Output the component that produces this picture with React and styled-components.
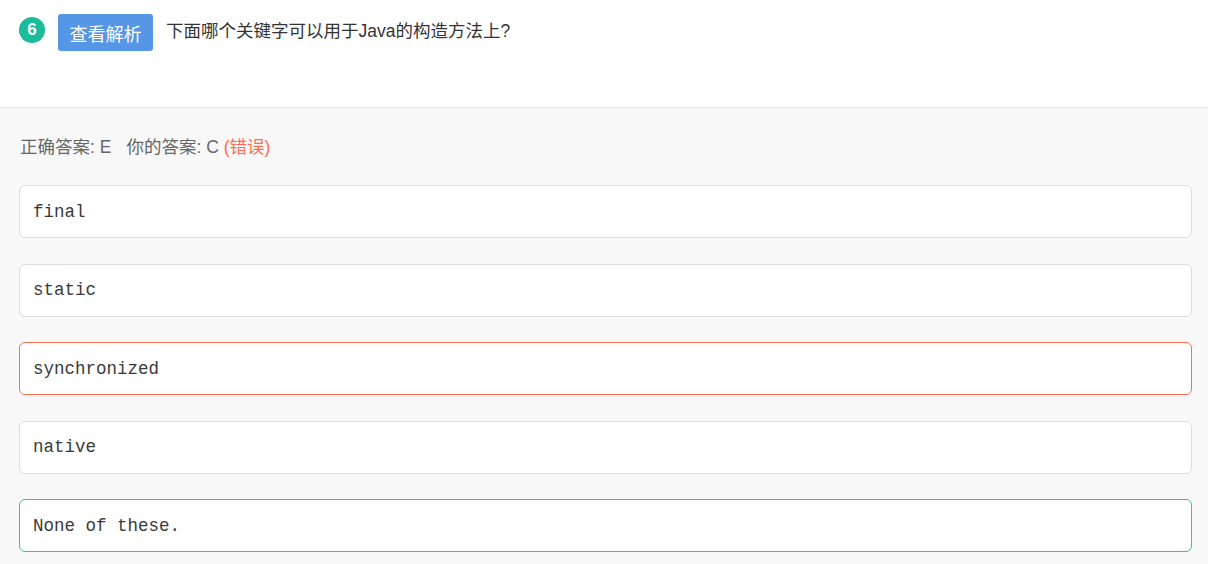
import styled, { createGlobalStyle } from 'styled-components';

const GlobalStyle = createGlobalStyle`
  body {
    margin: 0;
    background-color: #f8f8f8;
    font-family: "Liberation Sans", "Noto Sans CJK SC", sans-serif;
  }
`;

const options = [
  { text: 'final' },
  { text: 'static' },
  { text: 'synchronized', state: 'wrong' },
  { text: 'native' },
  { text: 'None of these.', state: 'right' },
];

export default function App() {
  return (
    <>
      <GlobalStyle />
      <StQuestion>
        <StBadge>6</StBadge>
        <StButton>查看解析</StButton>
        <StTitle>下面哪个关键字可以用于Java的构造方法上?</StTitle>
      </StQuestion>
      <StAnswerArea>
        <StAnswerLine>
          正确答案: E<StGap />你的答案: C <StWrong>(错误)</StWrong>
        </StAnswerLine>
        <StOptionList>
          {options.map((o) => (
            <StOption key={o.text} state={o.state}>
              {o.text}
            </StOption>
          ))}
        </StOptionList>
      </StAnswerArea>
    </>
  );
}

const StQuestion = styled.div`
  display: flex;
  align-items: flex-start;
  box-sizing: border-box;
  height: 108px;
  padding: 14px 0 0 19px;
  background-color: #ffffff;
  border-bottom: 1px solid #e8e8e8;
`;

const StBadge = styled.div`
  display: flex;
  align-items: center;
  justify-content: center;
  width: 26px;
  height: 26px;
  margin-top: 3px;
  border-radius: 50%;
  background-color: #1abc9c;
  color: #ffffff;
  font-size: 17px;
  font-weight: 600;
  font-family: "Liberation Sans", sans-serif;
`;

const StButton = styled.div`
  display: flex;
  align-items: center;
  justify-content: center;
  box-sizing: border-box;
  width: 95px;
  height: 37px;
  margin-left: 13px;
  border-radius: 3px;
  background-color: #5596e6;
  color: #ffffff;
  font-size: 18px;
`;

const StTitle = styled.div`
  margin-left: 13px;
  margin-top: 5px;
  line-height: 24px;
  font-size: 17.5px;
  color: #333333;
`;

const StAnswerArea = styled.div`
  padding: 27px 16px 0 19px;
`;

const StAnswerLine = styled.div`
  padding-left: 1px;
  line-height: 24px;
  font-size: 17.5px;
  color: #666666;
`;

const StGap = styled.span`
  display: inline-block;
  width: 15px;
`;

const StWrong = styled.span`
  color: #fc6e51;
`;

const StOptionList = styled.div`
  display: flex;
  flex-direction: column;
  gap: 25.5px;
  margin-top: 26px;
`;

const borderColor = {
  wrong: '#fc6e51',
  right: '#40bf95',
};

const StOption = styled.div`
  display: flex;
  align-items: center;
  box-sizing: border-box;
  height: 53px;
  padding-left: 13px;
  border: 1px solid ${(p) => borderColor[p.state] || '#dcdcdc'};
  border-radius: 6px;
  background-color: #ffffff;
  font-family: "Courier New", "Liberation Mono", monospace;
  font-size: 17.5px;
  color: #3a3a3a;
`;
